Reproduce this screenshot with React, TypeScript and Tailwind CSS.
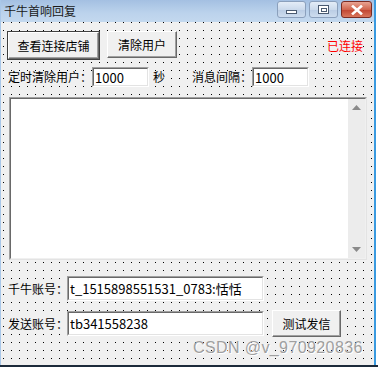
const dots =
  "bg-[linear-gradient(to_right,#f0f0f0_7px,transparent_7px),linear-gradient(to_bottom,#f0f0f0_7px,#000_7px)] bg-[length:8px_8px] bg-[position:3px_1px]";

function WinButton({ label, w, h, primary }: { label: string; w: string; h: string; primary?: boolean }) {
  return (
    <div className={`${w} ${h} ${primary ? "border border-[#404040]" : ""} shrink-0`}>
      <div className="flex h-full w-full items-center justify-center border border-b-[#696969] border-l-white border-r-[#696969] border-t-white bg-[#f0f0f0] text-[12px] leading-none text-black shadow-[inset_-1px_-1px_0_#a0a0a0]">
        {label}
      </div>
    </div>
  );
}

function TextBox({ value, w }: { value: string; w: string }) {
  return (
    <div className={`${w} h-full shrink-0 border border-b-white border-l-[#a0a0a0] border-r-white border-t-[#a0a0a0]`}>
      <div className="flex h-full w-full items-center whitespace-nowrap border border-b-[#e3e3e3] border-l-[#696969] border-r-[#e3e3e3] border-t-[#696969] bg-white pl-[1px] text-[13px] leading-none text-black">
        {value}
      </div>
    </div>
  );
}

function CaptionButton({ kind }: { kind: "min" | "max" | "close" }) {
  if (kind === "close") {
    return (
      <div className="flex h-[17px] w-[31px] items-center justify-center rounded-[3px] border border-[#7a2b22] bg-[linear-gradient(to_bottom,#e8a493,#d0654e_50%,#c04330_51%,#d9765c)]">
        <svg width="12" height="10" viewBox="0 0 12 10">
          <path d="M2 1.5 L10 8.5 M10 1.5 L2 8.5" stroke="#fff" strokeWidth="2.6" strokeLinecap="square" />
        </svg>
      </div>
    );
  }
  return (
    <div className="flex h-[17px] w-[29px] items-center justify-center rounded-[3px] border border-[#8ba0bc] bg-[linear-gradient(to_bottom,#e4edf7,#cbdaec_50%,#b9cce4_51%,#cddcee)]">
      {kind === "min" ? (
        <div className="mt-[5px] h-[4px] w-[11px] border border-[#4a5a70] bg-white" />
      ) : (
        <div className="flex h-[9px] w-[11px] items-center justify-center border border-[#4a5a70] bg-white">
          <div className="h-[4px] w-[6px] border border-[#4a5a70]" />
        </div>
      )}
    </div>
  );
}

export default function App() {
  return (
    <div className="relative h-[367px] w-[378px] overflow-hidden bg-white font-['Microsoft_YaHei','Noto_Sans_CJK_SC',sans-serif] text-[12px] text-black">
      <div className="flex h-[365px] w-[376px] flex-col border-l border-r-2 border-l-[#a9c7e8] border-r-[#3a9ae0]">
        {/* title bar */}
        <div className="flex h-[22px] shrink-0 items-center bg-[linear-gradient(to_bottom,#a4c0e2,#bcd3ec_60%,#c3d8ee)] pl-[3px] pr-[2px]">
          <span className="text-[12px] leading-none text-[#1a1a1a]">千牛首响回复</span>
          <div className="ml-auto mt-[-3px] flex gap-[3px]">
            <CaptionButton kind="min" />
            <CaptionButton kind="max" />
            <CaptionButton kind="close" />
          </div>
        </div>

        {/* client area */}
        <div className={`flex flex-1 flex-col ${dots}`}>
          <div className="mt-[9px] flex items-start pl-[6px] pr-[11px]">
            <WinButton label="查看连接店铺" w="w-[93px]" h="h-[29px]" primary />
            <div className="ml-[7px]">
              <WinButton label="清除用户" w="w-[70px]" h="h-[27px]" />
            </div>
            <span className="ml-auto mt-[9px] bg-[#f0f0f0] leading-none text-[#ff0000]">已连接</span>
          </div>

          <div className="mt-[7px] flex h-[20px] items-center whitespace-nowrap pl-[7px]">
            <span className="bg-[#f0f0f0] leading-none">定时清除用户：</span>
            <div className="h-full">
              <TextBox value="1000" w="w-[57px]" />
            </div>
            <span className="ml-[4px] bg-[#f0f0f0] leading-none">秒</span>
            <span className="ml-[27px] bg-[#f0f0f0] leading-none">消息间隔：</span>
            <div className="h-full">
              <TextBox value="1000" w="w-[57px]" />
            </div>
          </div>

          <div className="ml-[8px] mt-[10px] flex h-[163px] w-[358px] border border-b-[#e3e3e3] border-l-[#a0a0a0] border-r-[#e3e3e3] border-t-[#a0a0a0]">
            <div className="flex flex-1 border border-b-[#f0f0f0] border-l-[#696969] border-r-[#f0f0f0] border-t-[#696969] bg-white">
              <div className="flex-1" />
              <div className="flex w-[17px] flex-col items-center justify-between bg-[#ececec] py-[6px]">
                <svg width="9" height="5" viewBox="0 0 9 5">
                  <path d="M4.5 0 L9 5 L0 5 Z" fill="#8a8a8a" />
                </svg>
                <svg width="9" height="5" viewBox="0 0 9 5">
                  <path d="M0 0 L9 0 L4.5 5 Z" fill="#8a8a8a" />
                </svg>
              </div>
            </div>
          </div>

          <div className="mt-[16px] flex h-[25px] items-center pl-[7px]">
            <span className="w-[59px] shrink-0 whitespace-nowrap leading-none">
              <span className="bg-[#f0f0f0]">千牛账号：</span>
            </span>
            <TextBox value="t_1515898551531_0783:恬恬" w="w-[197px]" />
          </div>

          <div className="mt-[10px] flex h-[25px] items-center pl-[7px]">
            <span className="w-[59px] shrink-0 whitespace-nowrap leading-none">
              <span className="bg-[#f0f0f0]">发送账号：</span>
            </span>
            <TextBox value="tb341558238" w="w-[197px]" />
            <div className="ml-[8px]">
              <WinButton label="测试发信" w="w-[69px]" h="h-[27px]" />
            </div>
          </div>
        </div>
      </div>
      <div className="h-[2px] w-full bg-[#1c2a3a]" />

      {/* watermark */}
      <div className="absolute left-[193px] top-[340px] font-['Liberation_Sans',sans-serif] text-[16px] leading-none tracking-[0.4px] text-[#a0a0a0] [text-shadow:1px_1px_0_#fff]">
        CSDN @v_970920836
      </div>
    </div>
  );
}
